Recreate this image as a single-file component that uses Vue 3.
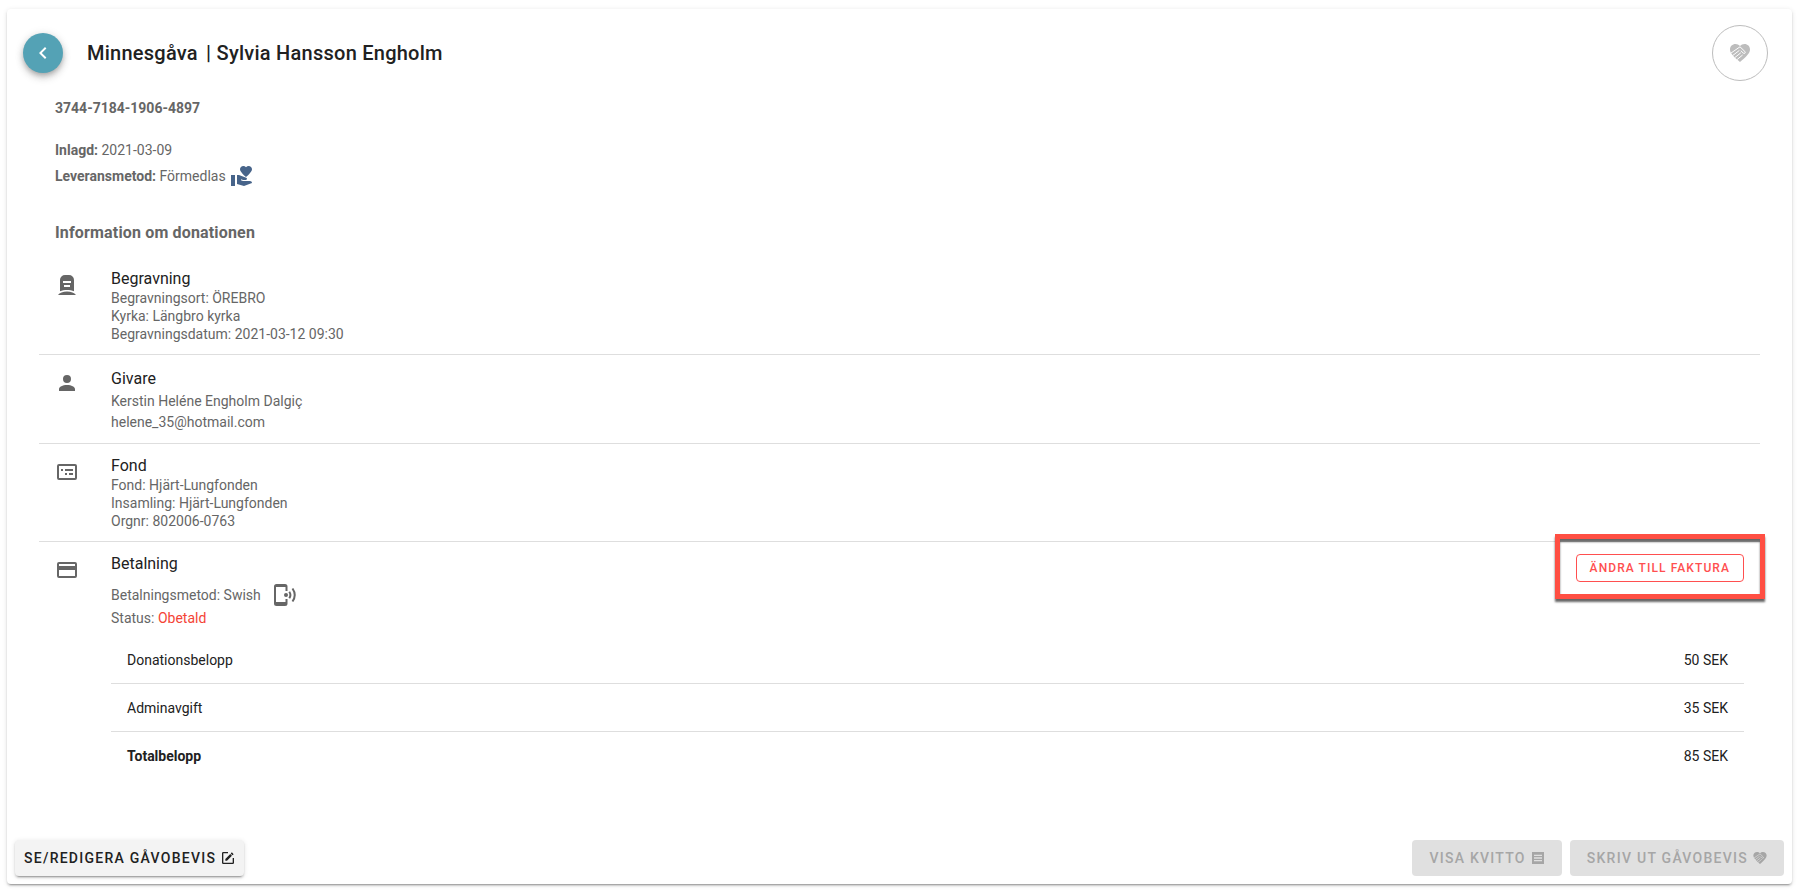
<script setup>
const rows = [
  { label: 'Donationsbelopp', amount: '50 SEK' },
  { label: 'Adminavgift', amount: '35 SEK' },
  { label: 'Totalbelopp', amount: '85 SEK', total: true },
]
const heart =
  'M12 21L10.6 19.8C5.4 15.2 2 12.1 2 8.4C2 5.4 4.4 3 7.5 3C9.2 3 10.9 3.8 12 5C13.1 3.8 14.8 3 16.5 3C19.6 3 22 5.4 22 8.4C22 12.1 18.6 15.2 13.4 19.8L12 21Z'
const fingers =
  'M2.800 12.200L12 5.800L16.800 10.400C18 11.600 16.600 13.200 15.300 12.100L12.800 9.700M4.600 14.600L11.400 9.400M6.800 16.600L12.800 11.800M9 18.600L14.600 14'
</script>

<template>
  <main class="page">
    <article class="card">
      <header class="head">
        <button class="back" type="button" aria-label="Tillbaka">
          <svg class="icon" viewBox="0 0 24 24"><path d="M15.4 7.4L14 6L8 12L14 18L15.4 16.6L10.8 12Z" fill="currentColor" /></svg>
        </button>
        <h1>Minnesgåva <span class="bar">|</span> Sylvia Hansson Engholm</h1>
        <span class="seal">
          <svg class="icon" viewBox="0 0 24 24"><path :d="heart" fill="currentColor" /><path :d="fingers" class="seal-lines" /></svg>
        </span>
      </header>

      <section class="summary">
        <p class="ident">3744-7184-1906-4897</p>
        <p><b>Inlagd:</b> 2021-03-09</p>
        <p class="delivery">
          <span><b>Leveransmetod:</b> Förmedlas</span>
          <svg class="icon blue" viewBox="0 0 24 24"><path fill="currentColor" d="M16 3.23C16.71 2.41 17.61 2 18.7 2C19.61 2 20.37 2.33 21 3C21.63 3.67 21.96 4.43 22 5.3C22 6 21.67 6.81 21 7.76C20.33 8.71 19.68 9.5 19.03 10.15C18.38 10.79 17.37 11.74 16 13C14.61 11.74 13.59 10.79 12.94 10.15C12.29 9.5 11.64 8.71 11 7.76C10.33 6.81 10 6 10 5.3C10 4.39 10.32 3.63 10.97 3C11.62 2.37 12.4 2.04 13.31 2C14.38 2 15.27 2.41 16 3.23M22 19L14 22L7 20.06V11H8.95L16.22 13.69C16.73 13.9 17 14.29 17 14.8C17 15.1 16.89 15.37 16.66 15.59C16.43 15.81 16.16 15.93 15.84 15.94H13L11.25 15.33L10.92 16.28L13 17H20C20.53 17 21 17.19 21.41 17.55C21.81 17.91 22 18.39 22 19M5 11V22H1V11H5Z" /></svg>
        </p>
        <h2>Information om donationen</h2>
      </section>

      <div class="list">
        <section class="item">
          <svg class="icon" viewBox="0 0 24 24"><path fill="currentColor" fill-rule="evenodd" d="M5 18.3V7A5 5 0 0 1 10 2H14A5 5 0 0 1 19 7V18.3C15 16.6 9 16.6 5 18.3ZM8 8V10H16V8ZM9 12V14H15V12ZM3 22C4.500 19.800 8 18.500 12 18.500C16 18.500 19.500 19.800 21 22Z" /></svg>
          <div>
            <h3>Begravning</h3>
            <p>Begravningsort: ÖREBRO</p>
            <p>Kyrka: Längbro kyrka</p>
            <p>Begravningsdatum: 2021-03-12 09:30</p>
          </div>
        </section>
        <section class="item donor">
          <svg class="icon" viewBox="0 0 24 24"><path fill="currentColor" d="M12 4A4 4 0 0 1 12 12A4 4 0 0 1 12 4M12 14C16.42 14 20 15.79 20 18V20H4V18C4 15.79 7.58 14 12 14Z" /></svg>
          <div>
            <h3>Givare</h3>
            <p>Kerstin Heléne Engholm Dalgiç</p>
            <p>helene_35@hotmail.com</p>
          </div>
        </section>
        <section class="item">
          <svg class="icon" viewBox="0 0 24 24"><rect x="3" y="5" width="18" height="14" rx="1" fill="none" stroke="currentColor" stroke-width="2" /><path fill="currentColor" d="M6 9H8V11H6ZM10 9H18V11H10ZM10 13H12V15H10ZM14 13H18V15H14Z" /></svg>
          <div>
            <h3>Fond</h3>
            <p>Fond: Hjärt-Lungfonden</p>
            <p>Insamling: Hjärt-Lungfonden</p>
            <p>Orgnr: 802006-0763</p>
          </div>
        </section>
        <section class="item payment">
          <svg class="icon" viewBox="0 0 24 24"><path fill="currentColor" d="M20 4H4A2 2 0 0 0 2 6V18A2 2 0 0 0 4 20H20A2 2 0 0 0 22 18V6A2 2 0 0 0 20 4M20 18H4V12H20V18M20 8H4V6H20V8Z" /></svg>
          <div>
            <div class="payment-top">
              <div>
                <h3>Betalning</h3>
                <p class="method">
                  Betalningsmetod: Swish
                  <svg class="icon" viewBox="0 0 24 24"><path fill="currentColor" d="M3.500 1H12A2.500 2.500 0 0 1 14.500 3.500V8H12.500V4H3V19H12.500V16H14.500V20.500A2.500 2.500 0 0 1 12 23H3.500A2.500 2.500 0 0 1 1 20.500V3.500A2.500 2.500 0 0 1 3.500 1Z" /><circle cx="13" cy="12" r="2" fill="currentColor" /><path d="M16.300 8.800Q18.500 12 16.300 15.200M19.500 5.500Q24 12 19.500 18.500" fill="none" stroke="currentColor" stroke-width="2" /></svg>
                </p>
                <p class="status">Status: <span class="unpaid">Obetald</span></p>
              </div>
              <div class="highlight"><button class="outlined" type="button">ÄNDRA TILL FAKTURA</button></div>
            </div>
            <table>
              <tbody>
                <tr v-for="row in rows" :key="row.label" :class="{ total: row.total }">
                  <th scope="row">{{ row.label }}</th>
                  <td>{{ row.amount }}</td>
                </tr>
              </tbody>
            </table>
          </div>
        </section>
      </div>

      <footer class="actions">
        <button class="btn edit" type="button">
          SE/REDIGERA GÅVOBEVIS
          <svg class="icon-sm" viewBox="0 0 24 24"><path fill="currentColor" d="M5 3A2 2 0 0 0 3 5V19A2 2 0 0 0 5 21H19A2 2 0 0 0 21 19V12H19V19H5V5H12V3H5M17.800 3.500L16.100 5.400L18.600 7.900L20.500 6.200ZM15.400 6.100L8 13.500V16H10.500L17.900 8.600Z" /></svg>
        </button>
        <button class="btn" type="button" disabled>
          VISA KVITTO
          <svg class="icon-sm" viewBox="0 0 24 24"><path fill="currentColor" fill-rule="evenodd" d="M3 3H21V21H3ZM6 7V9H18V7ZM6 11V13H18V11ZM6 15V17H18V15Z" /></svg>
        </button>
        <button class="btn" type="button" disabled>
          SKRIV UT GÅVOBEVIS
          <svg class="icon-sm" viewBox="0 0 24 24"><path :d="heart" fill="currentColor" /><path :d="fingers" class="btn-lines" /></svg>
        </button>
      </footer>
    </article>
  </main>
</template>

<style>
body { margin: 0; background: #fff; }
</style>

<style scoped>
* { box-sizing: border-box; }
h1, h2, h3, p { margin: 0; }
button { font-family: inherit; }
svg { display: block; flex: none; }
.page {
  display: flex;
  min-height: 100vh;
  padding: 9px 10px 8px 7px;
  font: 14px/18px Roboto, sans-serif;
  color: #666;
}
.card {
  flex: 1;
  display: flex;
  flex-direction: column;
  border-radius: 4px;
  background: #fff;
  box-shadow: 0 3px 1px -2px rgba(0, 0, 0, .2), 0 2px 2px 0 rgba(0, 0, 0, .14), 0 1px 5px 0 rgba(0, 0, 0, .12);
}
.icon { width: 24px; height: 24px; }
.icon-sm { width: 16px; height: 16px; }
.head { display: flex; align-items: center; gap: 24px; padding: 16px 24px 0 16px; }
.head h1 { flex: 1; font-size: 20px; line-height: 32px; font-weight: 500; letter-spacing: 0.0125em; color: #212121; }
.bar { margin-left: 3px; }
.back {
  display: grid;
  place-items: center;
  width: 40px;
  height: 40px;
  padding: 0;
  border: 0;
  border-radius: 50%;
  background: #54a2b5;
  color: #fff;
  box-shadow: 0 3px 5px -1px rgba(0, 0, 0, .2), 0 5px 8px 0 rgba(0, 0, 0, .14), 0 1px 10px 0 rgba(0, 0, 0, .12);
}
.seal {
  display: grid;
  place-items: center;
  width: 56px;
  height: 56px;
  border: 1px solid #bdbdbd;
  border-radius: 50%;
  color: #bdbdbd;
}
.seal-lines, .btn-lines { fill: none; stroke: #fff; stroke-width: 1; }
.btn-lines { stroke: #e0e0e0; }
.summary { padding: 16px 48px 0; line-height: 22px; }
.ident { margin-bottom: 20px; font-weight: 700; }
.delivery { display: flex; align-items: center; gap: 4px; height: 30px; }
.blue { color: #47648a; }
.summary h2 { margin-top: 30px; font-size: 16px; line-height: 24px; font-weight: 700; letter-spacing: 0.01em; }
.list { padding: 12px 32px 0; }
.item { display: grid; grid-template-columns: 24px 1fr; column-gap: 32px; padding: 12px 16px 11px; border-bottom: 1px solid #dedede; }
.item > svg { margin-top: 4px; }
h3 { font-size: 16px; line-height: 20px; font-weight: 400; color: #212121; }
.donor { padding: 14px 16px 10px; }
.donor > svg { margin-top: 2px; }
.donor h3 { margin-bottom: 2px; }
.donor p { line-height: 21px; }
.payment { padding-bottom: 24px; border-bottom: 0; }
.payment-top { display: flex; justify-content: space-between; align-items: flex-start; margin-bottom: 8px; }
.method { display: flex; align-items: center; gap: 12px; height: 24px; margin-top: 9px; }
.status { line-height: 20px; margin-top: 1px; }
.unpaid { color: #f44336; }
.highlight {
  margin: -20px -21px 0 0;
  padding: 15px 16px 12px;
  border: 5px solid #ff4f43;
  box-shadow: 0 3px 2px rgba(0, 0, 0, .6), inset 0 3px 2px rgba(0, 0, 0, .6);
}
.outlined {
  display: block;
  height: 28px;
  padding: 0 13px;
  border: 1px solid #ff4f4f;
  border-radius: 4px;
  background: #fff;
  color: #ff4f4f;
  font-size: 12px;
  font-weight: 500;
  letter-spacing: 0.09em;
}
table { width: 100%; border-collapse: separate; border-spacing: 0; color: #212121; }
th, td { height: 48px; padding: 0 16px; border-bottom: 1px solid #dedede; }
th { text-align: left; font-weight: 400; }
td { text-align: right; }
.total > * { border-bottom: 0; }
.total th { font-weight: 700; }
.actions { display: flex; gap: 8px; margin-top: auto; padding: 8px; }
.btn {
  display: flex;
  align-items: center;
  gap: 4px;
  height: 36px;
  padding: 0 16px 0 17px;
  border: 0;
  border-radius: 4px;
  font-size: 14px;
  font-weight: 500;
  letter-spacing: 0.09em;
  background: #e0e0e0;
  color: #a6a6a6;
}
.edit {
  margin-right: auto;
  padding: 0 8px 0 9px;
  background: #f3f3f3;
  color: #212121;
  box-shadow: 0 3px 1px -2px rgba(0, 0, 0, .2), 0 2px 2px 0 rgba(0, 0, 0, .14), 0 1px 5px 0 rgba(0, 0, 0, .12);
}
</style>
